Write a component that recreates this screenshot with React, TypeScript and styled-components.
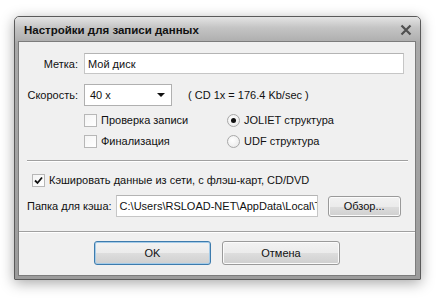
import React from "react"
import styled, { createGlobalStyle } from "styled-components"

const Global = createGlobalStyle`
  html, body { margin: 0; padding: 0; background: #ffffff; }
  body { font-family: "Liberation Sans", Arial, sans-serif; font-size: 11px; color: #111; }
`

const Page = styled.div`
  padding: 16px 0 0 14px;
  width: 443px;
  height: 305px;
  box-sizing: border-box;
`

const Window = styled.div`
  width: 407px;
  height: 264px;
  box-sizing: border-box;
  border: 1px solid #5a5a5a;
  border-radius: 5px 5px 1px 1px;
  background: linear-gradient(#d9d9d9, #a9a9a9 10%, #9c9c9c);
  box-shadow: 0 3px 14px rgba(0, 0, 0, 0.35);
  display: flex;
  flex-direction: column;
  overflow: hidden;
`

const TitleBar = styled.div`
  height: 24px;
  flex: none;
  display: flex;
  align-items: center;
  justify-content: space-between;
  padding: 0 6px 0 9px;
  border-radius: 4px 4px 0 0;
  background: linear-gradient(#e4e4e4, #c4c4c4 45%, #afafaf);
`

const Title = styled.span`
  font-weight: bold;
  font-size: 11.5px;
  color: #111;
  padding-top: 2px;
`

const Close = styled.svg`
  width: 12px;
  height: 12px;
  margin-top: 1px;
  margin-right: 2px;
`

const Body = styled.div`
  flex: 1;
  min-height: 0;
  margin: 0 4px 3px 3px;
  border: 1px solid #7c7c7c;
  background: #f0f0f0;
  display: flex;
  flex-direction: column;
`

const Main = styled.div`
  padding: 11px 7px 0 8px;
  display: flex;
  flex-direction: column;
`

const FieldRow = styled.div<{ $top?: number }>`
  display: flex;
  align-items: center;
  margin-top: ${(p) => p.$top ?? 0}px;
`

const Label = styled.span<{ $w?: number; $gap?: number }>`
  width: ${(p) => (p.$w ? `${p.$w}px` : "auto")};
  flex: none;
  text-align: right;
  margin-right: ${(p) => p.$gap ?? 6}px;
  white-space: nowrap;
`

const TextBox = styled.div<{ $w: number; $h: number }>`
  width: ${(p) => p.$w}px;
  height: ${(p) => p.$h}px;
  flex: none;
  box-sizing: border-box;
  border: 1px solid #c6c6c6;
  border-top-color: #b4b4b4;
  background: #fff;
  padding: 0 3px;
  display: flex;
  align-items: center;
  white-space: nowrap;
  overflow: hidden;
`

const Select = styled.div`
  width: 88px;
  height: 22px;
  box-sizing: border-box;
  border: 1px solid #b0b0b0;
  background: #fff;
  display: flex;
  align-items: center;
  justify-content: space-between;
  padding: 0 6px 0 5px;
`

const Arrow = styled.span`
  width: 0;
  height: 0;
  border-left: 4px solid transparent;
  border-right: 4px solid transparent;
  border-top: 4px solid #111;
`

const Note = styled.span`
  margin-left: 16px;
`

const Options = styled.div`
  display: grid;
  grid-template-columns: 143px auto;
  grid-auto-rows: 21px;
  margin: 4px 0 0 57px;
`

const Option = styled.label`
  display: flex;
  align-items: center;
  gap: 4px;
  white-space: nowrap;
  line-height: 13px;
`

const Box = styled.span`
  width: 13px;
  height: 13px;
  box-sizing: border-box;
  border: 1px solid #b7b7b7;
  background: linear-gradient(135deg, #f4f4f4, #ffffff);
  display: flex;
  align-items: center;
  justify-content: center;
`

const Radio = styled.span<{ $checked?: boolean }>`
  width: 13px;
  height: 13px;
  box-sizing: border-box;
  border-radius: 50%;
  border: 1px solid #a8a8a8;
  background: radial-gradient(circle at 40% 40%, #ffffff, #e6e6e6);
  display: flex;
  align-items: center;
  justify-content: center;
  &::after {
    content: "";
    width: 5px;
    height: 5px;
    border-radius: 50%;
    background: ${(p) => (p.$checked ? "#111" : "transparent")};
  }
`

const Separator = styled.div<{ $top?: number }>`
  height: 0;
  flex: none;
  border-top: 1px solid #a0a0a0;
  border-bottom: 1px solid #ffffff;
  margin-top: ${(p) => p.$top ?? 0}px;
`

const CacheOption = styled(Option)`
  margin: 12px 0 0 5px;
`

const Button = styled.button<{ $w: number; $h: number; $default?: boolean }>`
  width: ${(p) => p.$w}px;
  height: ${(p) => p.$h}px;
  flex: none;
  font: inherit;
  color: #111;
  border: 1px solid ${(p) => (p.$default ? "#3d7bad" : "#9a9a9a")};
  border-radius: 3px;
  background: linear-gradient(#f2f2f2, #ebebeb 50%, #dddddd 51%, #cfcfcf);
  box-shadow: inset 0 0 0 1px ${(p) => (p.$default ? "#a4cbe8" : "#fbfbfb")};
  padding: 0;
`

const BrowseButton = styled(Button)`
  margin-left: 10px;
`

const Footer = styled.div`
  flex: 1;
  display: flex;
  justify-content: center;
  align-items: flex-start;
  gap: 11px;
  padding-top: 8px;
`

export default function App() {
  return (
    <Page>
      <Global />
      <Window>
        <TitleBar>
          <Title>Настройки для записи данных</Title>
          <Close viewBox="0 0 12 12">
            <path d="M1.5 1.5 L10.5 10.5 M10.5 1.5 L1.5 10.5" stroke="#505050" strokeWidth="2.2" />
          </Close>
        </TitleBar>
        <Body>
          <Main>
            <FieldRow>
              <Label $w={51}>Метка:</Label>
              <TextBox $w={320} $h={21}>Мой диск</TextBox>
            </FieldRow>
            <FieldRow $top={10}>
              <Label $w={51}>Скорость:</Label>
              <Select>
                <span>40 x</span>
                <Arrow />
              </Select>
              <Note>( CD 1x = 176.4 Kb/sec )</Note>
            </FieldRow>
            <Options>
              <Option>
                <Box />
                Проверка записи
              </Option>
              <Option>
                <Radio $checked />
                JOLIET структура
              </Option>
              <Option>
                <Box />
                Финализация
              </Option>
              <Option>
                <Radio />
                UDF структура
              </Option>
            </Options>
            <Separator $top={8} />
            <CacheOption>
              <Box>
                <svg width="9" height="9" viewBox="0 0 9 9">
                  <path d="M1 4.5 L3.5 7 L8 1.5" stroke="#111" strokeWidth="1.8" fill="none" />
                </svg>
              </Box>
              Кэшировать данные из сети, с флэш-карт, CD/DVD
            </CacheOption>
            <FieldRow $top={8}>
              <Label $gap={4}>Папка для кэша:</Label>
              <TextBox $w={202} $h={22}>C:\Users\RSLOAD-NET\AppData\Local\Temp</TextBox>
              <BrowseButton $w={73} $h={21}>Обзор...</BrowseButton>
            </FieldRow>
          </Main>
          <Separator $top={14} />
          <Footer>
            <Button $w={117} $h={24} $default>OK</Button>
            <Button $w={118} $h={24}>Отмена</Button>
          </Footer>
        </Body>
      </Window>
    </Page>
  )
}
